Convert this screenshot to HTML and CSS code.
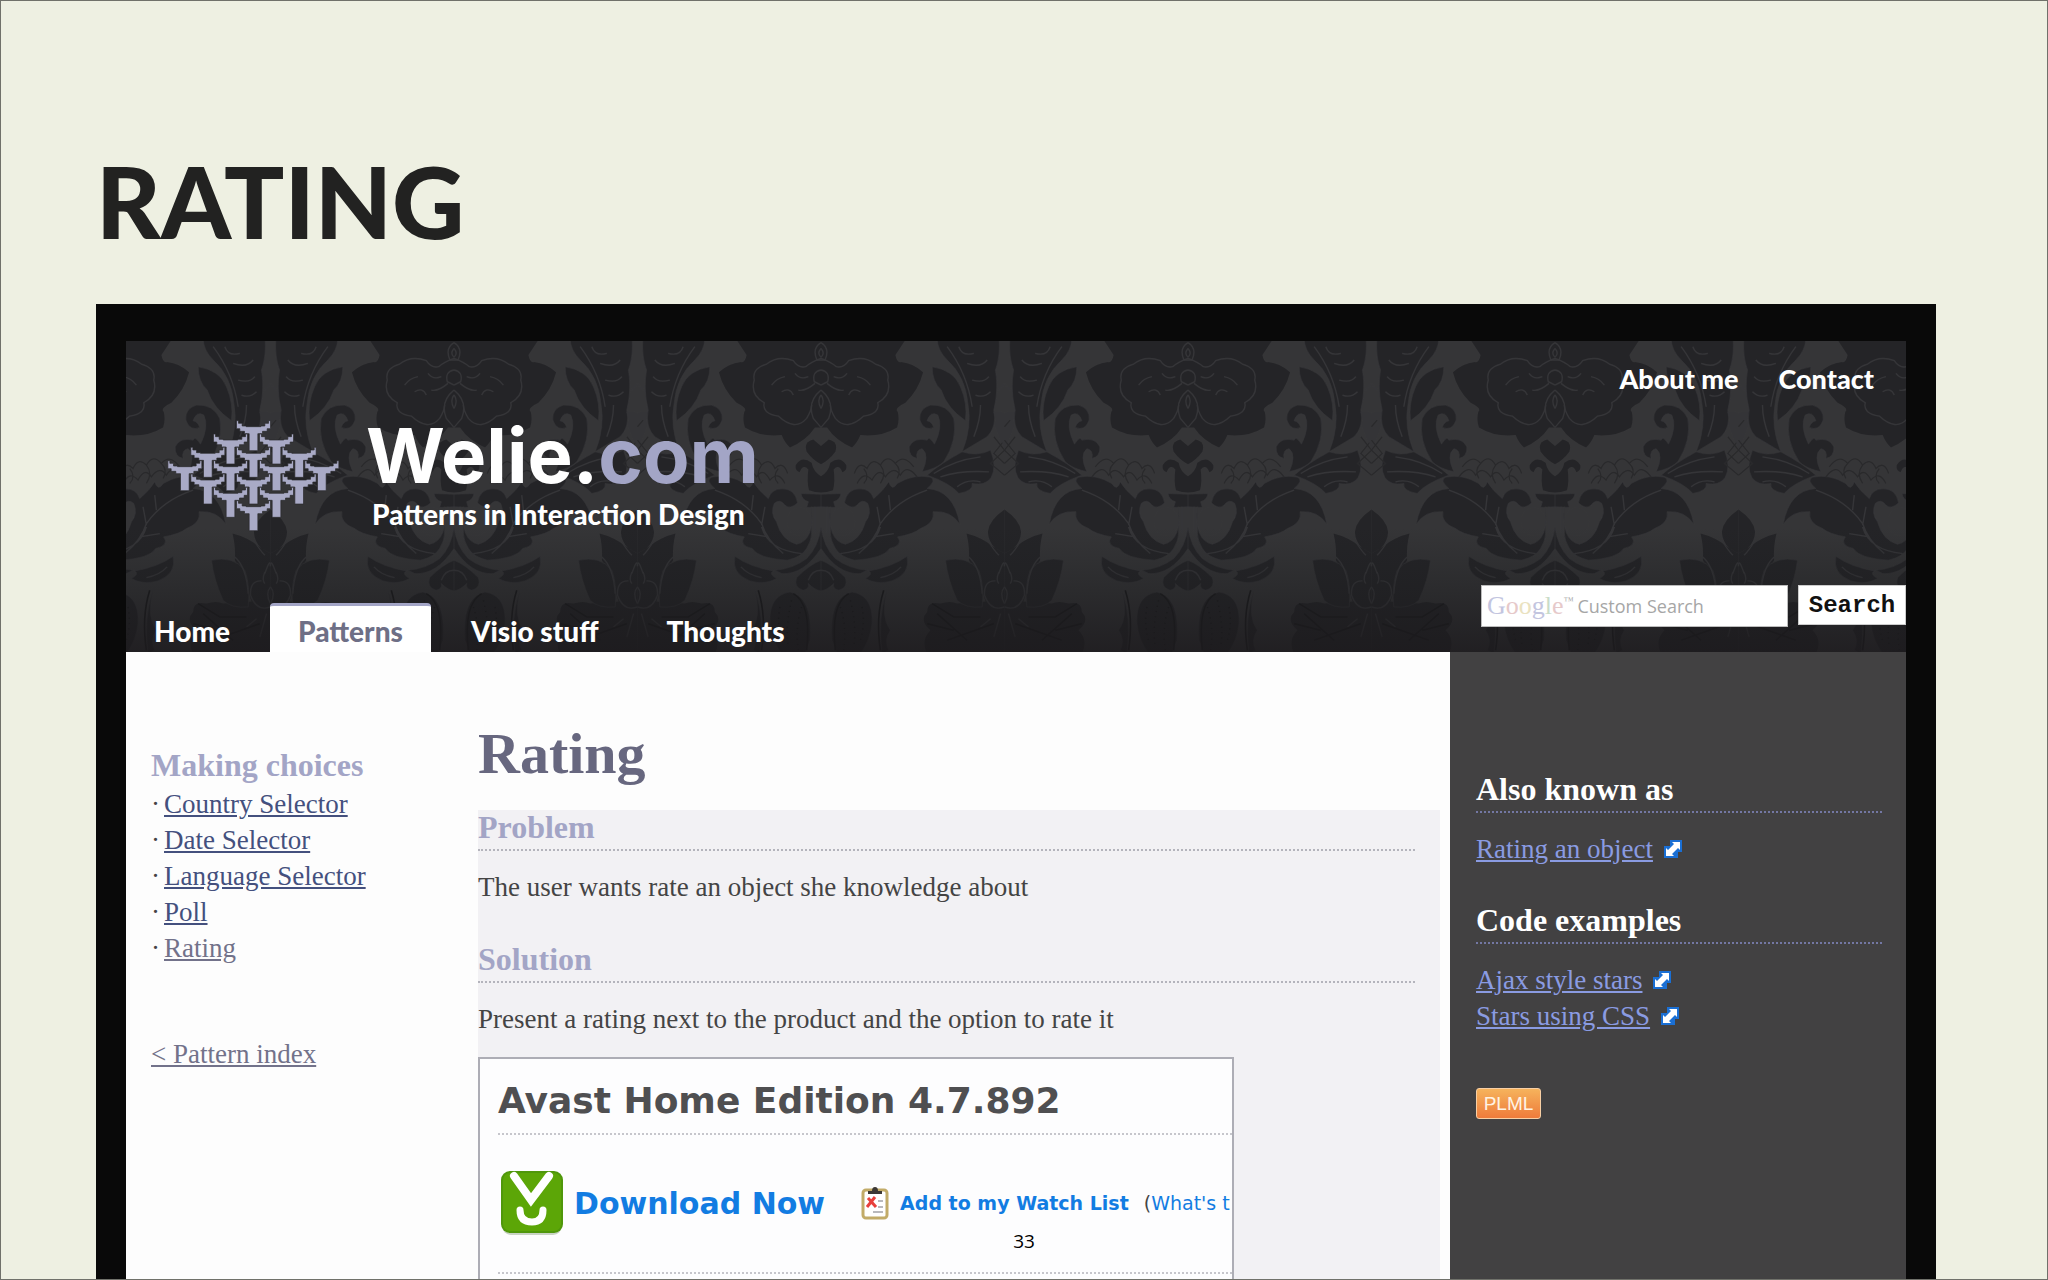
FILE: index.html
```html
<!DOCTYPE html>
<html lang="en">
<head>
    <meta charset="utf-8">
    <title>Rating</title>
    <link rel="stylesheet" href="styles.css">
</head>
<body>
    <div class="slide">
        <h1 class="slide-title">RATING</h1>

        <div class="frame">
            <header class="header">
                <svg class="damask" aria-hidden="true">
                    <defs>
                        <linearGradient id="shade" x1="0" y1="0" x2="0" y2="1">
                            <stop offset="0.6" stop-color="#1c1e20" stop-opacity="0"/>
                            <stop offset="1" stop-color="#1c1a1d" stop-opacity="0.8"/>
                        </linearGradient>
                        <!-- right half of the motif, mirrored for the left half -->
                        <g id="half">
                            <g fill="#242427" stroke="#333336" stroke-width="2">
                                <path d="M470 -5H656Q660 50 645 90Q655 150 640 210Q650 260 620 290L545 335Q575 260 562 190Q555 110 500 60Q470 30 470 -5z"/>
                                <path d="M455 80Q520 90 540 140Q562 190 555 242Q500 205 482 150Q455 125 455 80z"/>
                                <path d="M705 215Q670 205 640 250L672 330z" stroke="none" fill="#343437"/>
                                <path d="M122 -5H378L345 45Q350 70 362 66Q400 70 428 97Q415 150 375 188Q340 205 352 215Q358 240 350 262Q300 292 240 285Q230 310 215 322Q165 300 140 262H122z" stroke="none"/>
                                <path d="M122 318L145 298Q175 305 165 335Q145 362 122 372z" stroke="none"/>
                                <path d="M122 408Q145 395 150 368Q180 345 198 375Q200 392 186 396Q176 370 160 388Q165 425 158 450Q140 457 122 457z" stroke="none"/>
                                <path d="M122 462L182 460Q180 478 160 485L165 502L122 500z"/>
                                <path d="M545 335Q590 350 630 330Q650 380 632 412Q615 438 575 430Q580 452 535 460Q510 430 440 405Q480 370 545 335z"/>
                                <path d="M490 365Q532 300 520 235Q500 192 450 195Q415 205 418 240Q430 275 460 262Q455 245 440 242Q450 212 472 225Q488 260 462 312Q445 285 440 300Q400 290 386 320Q384 350 410 355Q405 330 425 326Q448 345 425 395Q470 385 490 365z"/>
                                <path d="M150 500Q140 600 195 612Q240 600 255 545Q275 520 262 490Q245 475 230 495Q215 510 192 488Q200 445 238 446Q270 445 280 475Q310 450 325 425Q335 455 350 430Q400 400 450 411Q470 420 440 445Q520 450 538 552Q510 510 458 515Q465 548 420 565Q400 582 352 590Q370 615 328 625Q310 655 222 660Q180 650 165 625Q150 600 150 580z"/>
                                <path d="M122 560Q130 620 165 655Q205 685 260 690L240 700Q175 705 122 625z"/>
                                <path d="M380 648Q392 700 335 722Q290 735 255 715Q280 700 265 692Q335 680 380 648z"/>
                                <path d="M122 660Q155 672 195 712Q205 742 175 750Q155 745 160 730Q140 750 122 752z"/>
                                <path d="M155 900Q145 770 215 755Q280 765 275 850Q270 900 240 940H170z"/>
                                <path d="M320 750Q290 830 305 940L325 930Q310 900 330 870Q300 830 320 750z"/>
                                <path d="M672 940H440Q420 900 450 870Q415 840 440 815Q440 780 480 790Q510 780 530 790L672 780z" stroke="none"/>
                                <path d="M558 580Q600 590 640 620L672 640V800H620Q590 700 565 660Q568 620 558 580z" stroke="none"/>
                                <path d="M495 660Q560 645 595 690Q612 740 605 800Q555 805 530 780Q502 720 495 660z"/>
                                <path d="M672 508Q625 540 622 575Q624 605 645 625L672 640z" stroke="none"/>
                            </g>
                            <g fill="none" stroke="#353538" stroke-width="4">
                                <path d="M122 55Q150 65 168 80Q190 85 205 62Q250 45 285 72Q330 85 322 120Q335 165 292 188Q300 220 250 228Q200 275 165 235Q150 210 150 195"/>
                                <path d="M122 8Q150 25 134 60H122M122 25Q135 40 122 52M122 90Q150 95 142 125L122 135M122 150Q165 185 145 235L122 262M140 130Q170 155 190 150M160 110Q185 120 200 100M205 165Q215 140 240 155M230 110Q255 115 270 135M122 165Q135 180 122 205"/>
                                <path d="M500 20Q560 100 575 200M535 20Q545 50 580 40M560 70Q600 85 620 60M575 120Q610 130 625 110M585 165Q610 175 630 155M600 195Q600 240 580 290"/>
                                <path d="M235 640Q285 600 300 550Q350 480 440 450M300 555L290 500M330 510L325 465M280 590L340 580M180 640Q280 630 300 560"/>
                                <path d="M460 400Q520 360 600 350M480 410Q540 390 625 395M530 440Q560 415 600 425"/>
                                <path d="M565 650Q600 680 605 760M622 600Q640 630 655 645M655 700Q672 650 672 678M645 722Q610 720 612 765Q630 815 672 800M655 695Q645 720 655 730M672 740Q655 760 672 790M630 835L600 860M660 820L640 890"/>
                                <path d="M122 690Q150 690 160 720M300 712Q340 705 362 680M140 500V580"/>
                                <path d="M655 150L672 130"/>
                            </g>
                            <ellipse cx="187" cy="545" rx="37" ry="42" fill="#353537"/>
                            <g fill="none" stroke="#29292b" stroke-width="4">
                                <path d="M222 400Q235 360 260 385Q275 350 300 375Q320 340 345 370Q370 340 400 380M230 430Q250 390 275 420Q295 380 315 410Q340 375 360 405Q380 370 410 410M250 385Q270 410 250 430M300 375Q320 400 300 430M345 370Q365 390 350 415"/>
                                <path d="M640 290L672 330L630 370L672 405M672 300L640 340L672 370M655 240L672 260"/>
                            </g>
                            <g fill="none" stroke="#19191b" stroke-width="5">
                                <path d="M180 800Q200 860 190 930M210 780Q230 860 220 920M245 800Q255 850 240 900" stroke-dasharray="4 12"/>
                                <path d="M455 790L520 830L600 830M440 850L520 870M500 900L640 850M470 820L560 900"/>
                                <path d="M165 930Q150 790 205 760M310 750Q285 830 300 930"/>
                            </g>
                        </g>
                        <pattern id="motif" x="328" y="0" width="367" height="311" patternUnits="userSpaceOnUse">
                            <use href="#half" transform="scale(.3337 .3337) translate(-122 -3)"/>
                            <use href="#half" transform="translate(367) scale(-.3337 .3337) translate(-122 -3)"/>
                        </pattern>
                    </defs>
                    <rect width="100%" height="100%" fill="url(#motif)"/>
                    <rect width="100%" height="100%" fill="url(#shade)"/>
                </svg>

                <div class="header-left">
                    <div class="brand">
                        <svg class="brand-mark" viewBox="50 46 518 336" aria-hidden="true">
                            <defs>
                                <path id="y" d="M-51 0h6v8h11v8h12v2h44v-2h12v-8h11V0h6v24h-10v8h-14v7h-14v51h-26V39h-14v-7h-14v-8h-10z"/>
                            </defs>
                            <g fill="#a9aac6" stroke="#29292b" stroke-width="2">
                                <use href="#y" x="309" y="48"/>
                                <use href="#y" x="240" y="88"/>
                                <use href="#y" x="378" y="88"/>
                                <use href="#y" x="172" y="128"/>
                                <use href="#y" x="309" y="128"/>
                                <use href="#y" x="446" y="128"/>
                                <use href="#y" x="103" y="168"/>
                                <use href="#y" x="240" y="168"/>
                                <use href="#y" x="378" y="168"/>
                                <use href="#y" x="514" y="168"/>
                                <use href="#y" x="172" y="208"/>
                                <use href="#y" x="309" y="208"/>
                                <use href="#y" x="446" y="208"/>
                                <use href="#y" x="240" y="248"/>
                                <use href="#y" x="378" y="248"/>
                                <use href="#y" x="309" y="288"/>
                            </g>
                        </svg>
                        <div class="brand-text">
                            <div class="brand-name">Welie.<span>com</span></div>
                            <div class="tagline">Patterns in Interaction Design</div>
                        </div>
                    </div>
                    <nav class="tabs">
                        <a href="#">Home</a>
                        <a href="#" class="active">Patterns</a>
                        <a href="#">Visio stuff</a>
                        <a href="#">Thoughts</a>
                    </nav>
                </div>

                <div class="header-right">
                    <nav class="top-links">
                        <a href="#">About me</a>
                        <a href="#">Contact</a>
                    </nav>
                    <form class="search">
                        <label class="search-box">
                            <span class="google"><i class="b">G</i><i class="r">o</i><i class="y">o</i><i class="b">g</i><i class="g">l</i><i class="r">e</i><sup>™</sup></span>
                            <input type="text" name="q" placeholder="Custom Search">
                        </label>
                        <button type="button">Search</button>
                    </form>
                </div>
            </header>

            <div class="content">
                <nav class="side-nav">
                    <h3>Making choices</h3>
                    <ul>
                        <li><a href="#">Country Selector</a></li>
                        <li><a href="#">Date Selector</a></li>
                        <li><a href="#">Language Selector</a></li>
                        <li><a href="#">Poll</a></li>
                        <li><a href="#" class="visited">Rating</a></li>
                    </ul>
                    <a href="#" class="visited">&lt; Pattern index</a>
                </nav>

                <main class="pattern">
                    <h2>Rating</h2>
                    <div class="sections">
                        <section>
                            <h3>Problem</h3>
                            <p>The user wants rate an object she knowledge about</p>
                        </section>
                        <section>
                            <h3>Solution</h3>
                            <p>Present a rating next to the product and the option to rate it</p>
                        </section>
                        <div class="product">
                            <h4>Avast Home Edition 4.7.892</h4>
                            <div class="actions">
                                <svg class="download-icon" viewBox="0 0 64 66" aria-hidden="true">
                                    <rect x="2" y="4" width="60" height="61" rx="9" fill="#c9d3c4"/>
                                    <rect x="1" y="1" width="62" height="62" rx="9" fill="#4f970b"/>
                                    <rect x="3" y="3" width="58" height="58" rx="7" fill="#5ca607"/>
                                    <path d="M14 6L31 30L49 6" fill="none" stroke="#fff" stroke-width="8" stroke-linecap="round"/>
                                    <path d="M20 40Q20 52 32 52Q43 52 43 40" fill="none" stroke="#fff" stroke-width="7" stroke-linecap="round"/>
                                </svg>
                                <a href="#" class="download">Download Now</a>
                                <svg class="watch-icon" viewBox="0 0 28 34" aria-hidden="true">
                                    <rect x="2" y="4" width="24" height="28" rx="3" fill="#fff" stroke="#c2ab68" stroke-width="3"/>
                                    <path d="M7 8V5h4q0-4 3-4t3 4h4v3z" fill="#3c3835"/>
                                    <path d="M7 12l8 9M14 11l-8 10" stroke="#e8403c" stroke-width="3"/>
                                    <path d="M17 15h5M17 21h5M12 26h10" stroke="#b9b9bd" stroke-width="2"/>
                                </svg>
                                <a href="#" class="watch">Add to my Watch List</a>
                                <span class="whats">(<a href="#">What's t</a></span>
                            </div>
                        </div>
                    </div>
                </main>

                <aside class="sidebar">
                    <svg class="defs" aria-hidden="true">
                        <symbol id="ext" viewBox="0 0 18 18">
                            <path d="M6 0h12v12h-4v6H0V6h6z" fill="#1a6fd4"/>
                            <path d="M8 2h8v8l-2-2-6 6 2 2H2V8l2 2 6-6z" fill="#fff"/>
                        </symbol>
                    </svg>
                    <section>
                        <h3>Also known as</h3>
                        <p><a href="#">Rating an object</a> <svg class="ext"><use href="#ext"/></svg></p>
                    </section>
                    <section>
                        <h3>Code examples</h3>
                        <p><a href="#">Ajax style stars</a> <svg class="ext"><use href="#ext"/></svg></p>
                        <p><a href="#">Stars using CSS</a> <svg class="ext"><use href="#ext"/></svg></p>
                    </section>
                    <a href="#" class="plml">PLML</a>
                </aside>
            </div>
        </div>

        <div class="page-number">33</div>
    </div>
</body>
</html>
```
FILE: styles.css
```css
* {
    box-sizing: border-box;
}
body {
    margin: 0;
    background-color: #eef0e2;
    font-family: "Liberation Serif", serif;
    color: #444;
}
h1, h2, h3, h4, p, ul {
    margin: 0;
    padding: 0;
}
.slide {
    position: relative;
    display: flex;
    flex-direction: column;
    height: 100vh;
    padding: 135px 111px 0 95px;
    border: 1px solid #70716a;
    overflow: hidden;
}
.slide-title {
    margin-bottom: 40px;
    font-family: Lato, sans-serif;
    font-size: 100px;
    font-weight: 900;
    line-height: 128px;
    color: #222221;
}
.frame {
    flex: 1;
    display: flex;
    flex-direction: column;
    min-height: 0;
    padding: 37px 30px 0;
    background: #090909;
}

/* header */
.header {
    position: relative;
    display: flex;
    justify-content: space-between;
    flex-shrink: 0;
    height: 311px;
    background: #353537;
    font-family: Lato, sans-serif;
}
.damask {
    position: absolute;
    inset: 0;
    width: 100%;
    height: 100%;
}
.header-left, .header-right {
    position: relative;
    display: flex;
    flex-direction: column;
    justify-content: space-between;
}
.brand {
    display: flex;
    gap: 26px;
    padding: 64px 0 0 41px;
}
.brand-mark {
    width: 173px;
    height: 112px;
    margin-top: 15px;
}
.brand-name {
    font-family: Inter, sans-serif;
    font-size: 76px;
    font-weight: 700;
    line-height: 100px;
    color: #fff;
}
.brand-name span {
    color: #a3a5c6;
}
.tagline {
    margin-top: -4px;
    padding-left: 6px;
    font-size: 28px;
    font-weight: 900;
    line-height: 26px;
    color: #fff;
}
.tabs {
    display: flex;
    align-items: flex-end;
    gap: 12px;
}
.tabs a, .top-links a {
    font-size: 28px;
    font-weight: 900;
    color: #fff;
    text-decoration: none;
}
.tabs a {
    padding: 4px 28px 0;
    border-top: 3px solid transparent;
    line-height: 42px;
}
.tabs .active {
    background: #fff;
    border-top-color: #a3a5c6;
    border-radius: 4px 4px 0 0;
    color: #6e6f86;
}
.header-right {
    align-items: flex-end;
    padding: 20px 0 25px;
}
.top-links {
    display: flex;
    gap: 40px;
    padding-right: 32px;
    line-height: 36px;
}
.top-links a {
    font-size: 27px;
}
.search {
    display: flex;
    gap: 10px;
}
.search-box {
    display: flex;
    align-items: center;
    gap: 4px;
    width: 307px;
    height: 42px;
    padding: 0 5px;
    background: #fff;
    border: 1px solid #bcbcbc;
}
.google {
    font-family: "Liberation Serif", serif;
    font-size: 26px;
}
.google i {
    font-style: normal;
}
.google .b { color: #c3c5df; }
.google .r { color: #e6c9ca; }
.google .y { color: #eae2c0; }
.google .g { color: #c8dcc8; }
.google sup {
    font-size: 10px;
    vertical-align: 10px;
    color: #aaa;
}
.search input {
    flex: 1;
    min-width: 0;
    padding: 0;
    border: 0;
    outline: 0;
    background: none;
    font-family: "Open Sans", sans-serif;
    font-size: 18px;
}
.search input::placeholder {
    color: #a6a6a6;
    opacity: 1;
}
.search button {
    width: 108px;
    height: 40px;
    padding: 0;
    border: 1px solid #ccc;
    background: #fff;
    font-family: "Liberation Mono", monospace;
    font-size: 24px;
    font-weight: 700;
    color: #111;
}

/* content */
.content {
    flex: 1;
    display: flex;
    background: #fdfdfd;
}
h3 {
    font-size: 32px;
    line-height: 34px;
    color: #a3a5c6;
}
.side-nav, p {
    font-size: 27px;
    line-height: 36px;
}
.side-nav {
    width: 352px;
    padding: 96px 0 0 25px;
}
.side-nav ul {
    margin: 4px 0 70px;
    list-style: none;
}
.side-nav li::before {
    content: "·";
    padding-right: 4px;
}
.side-nav a {
    color: #44507e;
}
.side-nav a.visited {
    color: #72728a;
}
.pattern {
    flex: 1;
    padding: 70px 10px 0 0;
}
h2 {
    margin-bottom: 24px;
    font-size: 58px;
    line-height: 64px;
    color: #67677f;
}
.sections {
    height: 100%;
    padding-right: 25px;
    background: #f2f1f4;
}
section h3 {
    margin-bottom: 18px;
    padding-bottom: 5px;
    border-bottom: 2px dotted #b4b4bc;
}
section {
    padding-bottom: 37px;
}
.product {
    width: 756px;
    max-width: 100%;
    height: 100%;
    margin-top: -17px;
    padding: 22px 0 0 18px;
    background: #fdfdfe;
    border: 2px solid #adadb5;
    overflow: hidden;
    font-family: "DejaVu Sans", sans-serif;
}
h4 {
    padding-bottom: 12px;
    border-bottom: 2px dotted #c6c6cc;
    font-size: 36px;
    line-height: 40px;
    color: #4f4f51;
}
.actions {
    display: flex;
    align-items: center;
    padding: 35px 0 36px 2px;
    border-bottom: 2px dotted #c6c6cc;
    white-space: nowrap;
}
.actions a {
    color: #127ce2;
    text-decoration: none;
}
.download-icon {
    flex-shrink: 0;
    width: 64px;
    height: 66px;
    margin-right: 10px;
}
.actions .download {
    font-size: 30px;
    font-weight: 700;
}
.watch-icon {
    flex-shrink: 0;
    width: 28px;
    height: 34px;
    margin: 0 11px 0 36px;
}
.actions .watch {
    font-size: 19px;
    font-weight: 700;
}
.whats {
    margin-left: 15px;
    font-size: 19px;
}

/* right column */
.sidebar {
    width: 456px;
    padding: 120px 24px 0 26px;
    background: #424142;
}
.defs {
    display: none;
}
.sidebar h3 {
    color: #fff;
    border-bottom-color: #7377a3;
}
.sidebar section {
    padding-bottom: 36px;
}
.sidebar a {
    color: #8a9be2;
}
.ext {
    width: 18px;
    height: 18px;
    margin-left: 4px;
}
.sidebar .plml {
    display: block;
    width: 65px;
    margin-top: 18px;
    background: linear-gradient(#f6b35c, #ee7b3b);
    border: 1px solid #f8cfa4;
    border-radius: 3px;
    font-family: "Liberation Sans", sans-serif;
    font-size: 19px;
    line-height: 29px;
    text-align: center;
    text-decoration: none;
    color: #fff3e4;
}

.page-number {
    position: absolute;
    left: 0;
    right: 0;
    bottom: 25px;
    font-family: "Open Sans", sans-serif;
    font-size: 19px;
    line-height: 26px;
    text-align: center;
    color: #000;
}
```
